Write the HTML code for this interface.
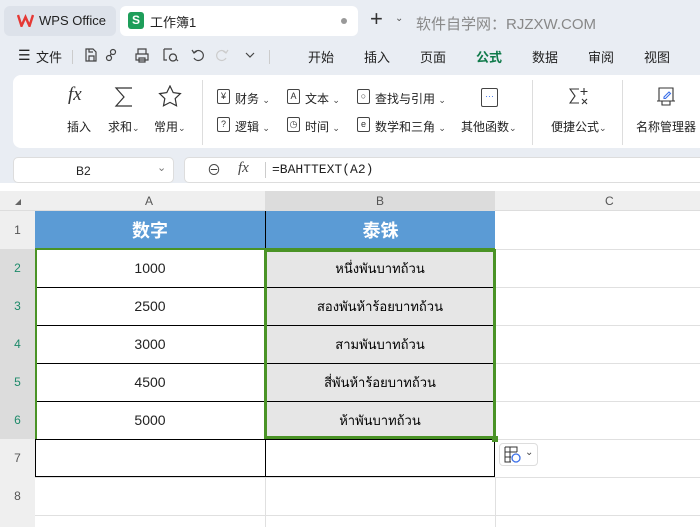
<!DOCTYPE html>
<html><head><meta charset="utf-8"><style>
*{margin:0;padding:0;box-sizing:border-box}
body{width:700px;height:527px;overflow:hidden;background:#e9edf3;font-family:"Liberation Sans","Noto Sans CJK SC",sans-serif;position:relative;font-size:12px;color:#222}
.abs{position:absolute}
.tab1{left:4px;top:6px;width:112px;height:30px;background:#dde2ea;border-radius:6px}
.tab2{left:120px;top:6px;width:238px;height:30px;background:#fff;border-radius:6px}
.menu span{position:absolute;top:47px;font-size:13px}
.ribbon{left:13px;top:75px;width:700px;height:73px;background:#fff;border-radius:8px}
.rl{font-size:12px;position:absolute}
.vs{position:absolute;width:1px;background:#ddd}
.grid{left:0;top:183px;width:700px;height:344px;background:#fff}
.cell{position:absolute;display:flex;align-items:center;justify-content:center;font-size:14px}
.rh{position:absolute;left:0;width:35px;display:flex;align-items:center;justify-content:center;font-size:12px;color:#555;background:#efefef}
.hl{position:absolute;height:1px;background:#e0e0e0}
.vl{position:absolute;width:1px;background:#e0e0e0}
.thai{font-family:"DejaVu Sans",sans-serif;font-size:13px;color:#000}
.di{position:absolute;width:13px;height:15px;border:1px solid #444;border-radius:2px;font-size:9px;text-align:center;line-height:13px;color:#333}
.ar{font-size:9px;color:#444}
</style></head><body>
<div class="abs tab1"></div>
<svg class="abs" style="left:17px;top:14px" width="17" height="13" viewBox="0 0 17 13"><path d="M1 1 L4.5 12 L8.5 3 L12.5 12 L16 1" fill="none" stroke="#e53935" stroke-width="2.4"/></svg>
<div class="abs" style="left:39px;top:13px;font-size:13px">WPS Office</div>
<div class="abs tab2"></div>
<div class="abs" style="left:128px;top:12px;width:16px;height:17px;background:#1e9e5a;border-radius:3px;color:#fff;font-weight:bold;font-size:12px;text-align:center;line-height:17px">S</div>
<div class="abs" style="left:150px;top:12px;font-size:13px">工作簿1</div>
<div class="abs" style="left:341px;top:18px;width:6px;height:6px;border-radius:50%;background:#999"></div>
<div class="abs" style="left:370px;top:6px;font-size:22px;color:#333">+</div>
<div class="abs" style="left:395px;top:13px;font-size:10px;color:#555">⌄</div>
<div class="abs" style="left:416px;top:13px;font-size:15px;color:#888">软件自学网：RJZXW.COM</div>
<div class="menu">
<span style="left:18px;font-size:14px">☰</span><span style="left:36px">文件</span>
<span style="left:308px">开始</span><span style="left:364px">插入</span><span style="left:420px">页面</span><span style="left:476px;color:#0f7a4a;font-weight:bold">公式</span><span style="left:532px">数据</span><span style="left:588px">审阅</span><span style="left:644px">视图</span>
</div>
<svg class="abs" style="left:80px;top:45px" width="180" height="20" viewBox="0 0 180 20" fill="none" stroke="#444" stroke-width="1.2">
<path d="M6 4h7l3 3v9H6z M9 16v-5h5v5 M9 4v3h4"/>
<circle cx="33" cy="7" r="2.5"/><circle cx="29" cy="13" r="2.5"/><path d="M31 9l-1 2"/>
<path d="M58 9v-5h8v5 M56 9h12v6h-12z M59 13h6v4h-6z"/>
<path d="M84 4h8 M84 4v11h3 M93 9a3.5 3.5 0 1 1 -0.1 0z M96 14l2 2"/>
<path d="M114 8a5 5 0 1 1 0 5 M112 5l2 3 3-2"/>
<path stroke="#ccc" d="M146 8a5 5 0 1 0 0 5 M148 5l-2 3-3-2"/>
<path d="M166 8l4 4 4-4"/>
</svg>
<div class="abs" style="left:72px;top:50px;width:1px;height:14px;background:#ccc"></div>
<div class="abs" style="left:269px;top:50px;width:1px;height:14px;background:#ccc"></div>
<div class="abs ribbon"></div>
<div class="abs" style="left:68px;top:84px;font-family:'Liberation Serif';font-style:italic;font-size:19px;color:#333">fx</div>
<svg class="abs" style="left:114px;top:86px" width="20" height="22" viewBox="0 0 20 22" fill="none" stroke="#333" stroke-width="1.2"><path d="M18 2H2l8 9-8 9h16"/></svg>
<svg class="abs" style="left:158px;top:85px" width="24" height="22" viewBox="0 0 24 22" fill="none" stroke="#333" stroke-width="1.2"><path d="M12 1l3.2 6.6 7.2 1-5.2 5 1.3 7.2L12 17.4l-6.5 3.4 1.3-7.2-5.2-5 7.2-1z"/></svg>
<div class="rl" style="left:67px;top:118px">插入</div>
<div class="rl" style="left:108px;top:118px">求和<span class="ar">⌄</span></div>
<div class="rl" style="left:154px;top:118px">常用<span class="ar">⌄</span></div>
<div class="vs" style="left:202px;top:80px;height:65px"></div>
<div class="di" style="left:217px;top:89px">¥</div><div class="rl" style="left:235px;top:90px">财务 <span class="ar">⌄</span></div>
<div class="di" style="left:287px;top:89px">A</div><div class="rl" style="left:305px;top:90px">文本 <span class="ar">⌄</span></div>
<div class="di" style="left:357px;top:89px">○</div><div class="rl" style="left:375px;top:90px">查找与引用 <span class="ar">⌄</span></div>
<div class="di" style="left:217px;top:117px">?</div><div class="rl" style="left:235px;top:118px">逻辑 <span class="ar">⌄</span></div>
<div class="di" style="left:287px;top:117px">◷</div><div class="rl" style="left:305px;top:118px">时间 <span class="ar">⌄</span></div>
<div class="di" style="left:357px;top:117px">e</div><div class="rl" style="left:375px;top:118px">数学和三角 <span class="ar">⌄</span></div>
<div class="abs" style="left:481px;top:88px;width:17px;height:19px;border:1px solid #444;border-radius:2px;color:#3a6ee8;font-size:9px;text-align:center;line-height:14px">···</div>
<div class="rl" style="left:461px;top:118px">其他函数<span class="ar">⌄</span></div>
<div class="vs" style="left:532px;top:80px;height:65px"></div>
<svg class="abs" style="left:569px;top:87px" width="22" height="20" viewBox="0 0 22 20" fill="none" stroke="#333" stroke-width="1.1"><path d="M10 2H1l5 7-5 7h9 M15 1v7 M11.5 4.5h7 M13 12l5 5 M18 12l-5 5"/></svg>
<div class="rl" style="left:551px;top:118px">便捷公式<span class="ar">⌄</span></div>
<div class="vs" style="left:622px;top:80px;height:65px"></div>
<svg class="abs" style="left:656px;top:87px" width="20" height="20" viewBox="0 0 20 20" fill="none" stroke="#333" stroke-width="1.1"><path d="M3 1h14v13H3z M1 14h5v4h8v-4h5" /><path d="M8 10l5-5 1.5 1.5-5 5H8z" stroke="#3a6ee8"/></svg>
<div class="rl" style="left:636px;top:118px">名称管理器</div>
<!-- formula bar -->
<div class="abs" style="left:13px;top:157px;width:161px;height:26px;background:#fff;border:1px solid #ddd;border-radius:5px"></div>
<div class="abs" style="left:76px;top:164px;font-size:12px">B2</div>
<div class="abs" style="left:157px;top:161px;font-size:11px;color:#777">⌄</div>
<div class="abs" style="left:184px;top:157px;width:530px;height:26px;background:#fff;border:1px solid #ddd;border-radius:5px"></div>
<div class="abs" style="left:207px;top:160px;font-size:14px;color:#444">⊖</div>
<div class="abs" style="left:238px;top:160px;font-family:'Liberation Serif';font-style:italic;font-size:15px;color:#444">fx</div>
<div class="abs" style="left:265px;top:162px;width:1px;height:16px;background:#ccc"></div>
<div class="abs" style="left:272px;top:162px;font-family:'Liberation Mono',monospace;font-size:13px">=BAHTTEXT(A2)</div>
<!-- grid -->
<div class="abs grid"></div>
<div class="abs" style="left:0;top:191px;width:700px;height:20px;background:#efefef;border-bottom:1px solid #ddd"></div>
<div class="abs" style="left:265px;top:191px;width:230px;height:20px;background:#dcdcdc"></div>
<div class="abs" style="left:145px;top:194px;font-size:12px;color:#555">A</div>
<div class="abs" style="left:376px;top:194px;font-size:12px;color:#555">B</div>
<div class="abs" style="left:605px;top:194px;font-size:12px;color:#555">C</div>
<div class="abs" style="left:15px;top:199px;width:0;height:0;border-left:6px solid transparent;border-bottom:6px solid #666"></div>
<div class="rh" style="top:211px;height:38px">1</div>
<div class="rh" style="top:249px;height:190px;background:#dcdcdc"></div>
<div class="rh" style="top:249px;height:38px;background:transparent;color:#1e8a6a">2</div>
<div class="rh" style="top:287px;height:38px;background:transparent;color:#1e8a6a">3</div>
<div class="rh" style="top:325px;height:38px;background:transparent;color:#1e8a6a">4</div>
<div class="rh" style="top:363px;height:38px;background:transparent;color:#1e8a6a">5</div>
<div class="rh" style="top:401px;height:38px;background:transparent;color:#1e8a6a">6</div>
<div class="rh" style="top:439px;height:38px">7</div>
<div class="rh" style="top:477px;height:38px">8</div>
<div class="rh" style="top:515px;height:12px"></div>
<div class="hl" style="left:495px;top:249px;width:205px"></div>
<div class="hl" style="left:495px;top:287px;width:205px"></div>
<div class="hl" style="left:495px;top:325px;width:205px"></div>
<div class="hl" style="left:495px;top:363px;width:205px"></div>
<div class="hl" style="left:495px;top:401px;width:205px"></div>
<div class="hl" style="left:495px;top:439px;width:205px"></div>
<div class="hl" style="left:35px;top:477px;width:665px"></div>
<div class="hl" style="left:35px;top:515px;width:665px"></div>
<div class="vl" style="left:265px;top:477px;height:50px"></div>
<div class="vl" style="left:495px;top:477px;height:50px"></div>
<!-- header row -->
<div class="cell" style="left:35px;top:211px;width:460px;height:38px;background:#5b9bd5"></div>
<div class="cell" style="left:35px;top:211px;width:230px;height:38px;color:#fff;font-weight:bold;font-size:18px">数字</div>
<div class="cell" style="left:265px;top:211px;width:230px;height:38px;color:#fff;font-weight:bold;font-size:18px;border-left:1px solid #000">泰铢</div>
<!-- data -->
<div class="abs" style="left:35px;top:249px;width:460px;height:228px;border:1px solid #000"></div>
<div class="abs" style="left:265px;top:249px;width:230px;height:190px;background:#e6e6e6"></div>
<div class="abs" style="left:265px;top:249px;width:1px;height:228px;background:#000"></div>
<div class="abs" style="left:35px;top:287px;width:460px;height:1px;background:#000"></div>
<div class="abs" style="left:35px;top:325px;width:460px;height:1px;background:#000"></div>
<div class="abs" style="left:35px;top:363px;width:460px;height:1px;background:#000"></div>
<div class="abs" style="left:35px;top:401px;width:460px;height:1px;background:#000"></div>
<div class="abs" style="left:35px;top:439px;width:460px;height:1px;background:#000"></div>
<div class="abs" style="left:35px;top:249px;width:2px;height:190px;background:#4a9326"></div>
<div class="abs" style="left:35px;top:248px;width:460px;height:2px;background:#4a9326"></div>
<div class="abs" style="left:264px;top:249px;width:232px;height:190px;border:3px solid #4a9326"></div>
<div class="abs" style="left:492px;top:436px;width:6px;height:6px;background:#4a9326"></div>
<div class="cell" style="left:35px;top:249px;width:230px;height:38px">1000</div>
<div class="cell" style="left:35px;top:287px;width:230px;height:38px">2500</div>
<div class="cell" style="left:35px;top:325px;width:230px;height:38px">3000</div>
<div class="cell" style="left:35px;top:363px;width:230px;height:38px">4500</div>
<div class="cell" style="left:35px;top:401px;width:230px;height:38px">5000</div>
<div class="cell thai" style="left:265px;top:249px;width:230px;height:38px">หนึ่งพันบาทถ้วน</div>
<div class="cell thai" style="left:265px;top:287px;width:230px;height:38px">สองพันห้าร้อยบาทถ้วน</div>
<div class="cell thai" style="left:265px;top:325px;width:230px;height:38px">สามพันบาทถ้วน</div>
<div class="cell thai" style="left:265px;top:363px;width:230px;height:38px">สี่พันห้าร้อยบาทถ้วน</div>
<div class="cell thai" style="left:265px;top:401px;width:230px;height:38px">ห้าพันบาทถ้วน</div>
<div class="abs" style="left:499px;top:443px;width:39px;height:23px;border:1px solid #ddd;border-radius:4px;background:#fff"></div>
<svg class="abs" style="left:504px;top:446px" width="18" height="17" viewBox="0 0 18 17"><path d="M1 1h12v5M1 1v15h6M1 6h12M1 11h6M6 1v15" fill="none" stroke="#333"/><circle cx="12" cy="12" r="4" fill="none" stroke="#3a6ee8" stroke-width="1.3"/></svg>
<div class="abs" style="left:525px;top:447px;font-size:10px;color:#444">⌄</div>
</body></html>
